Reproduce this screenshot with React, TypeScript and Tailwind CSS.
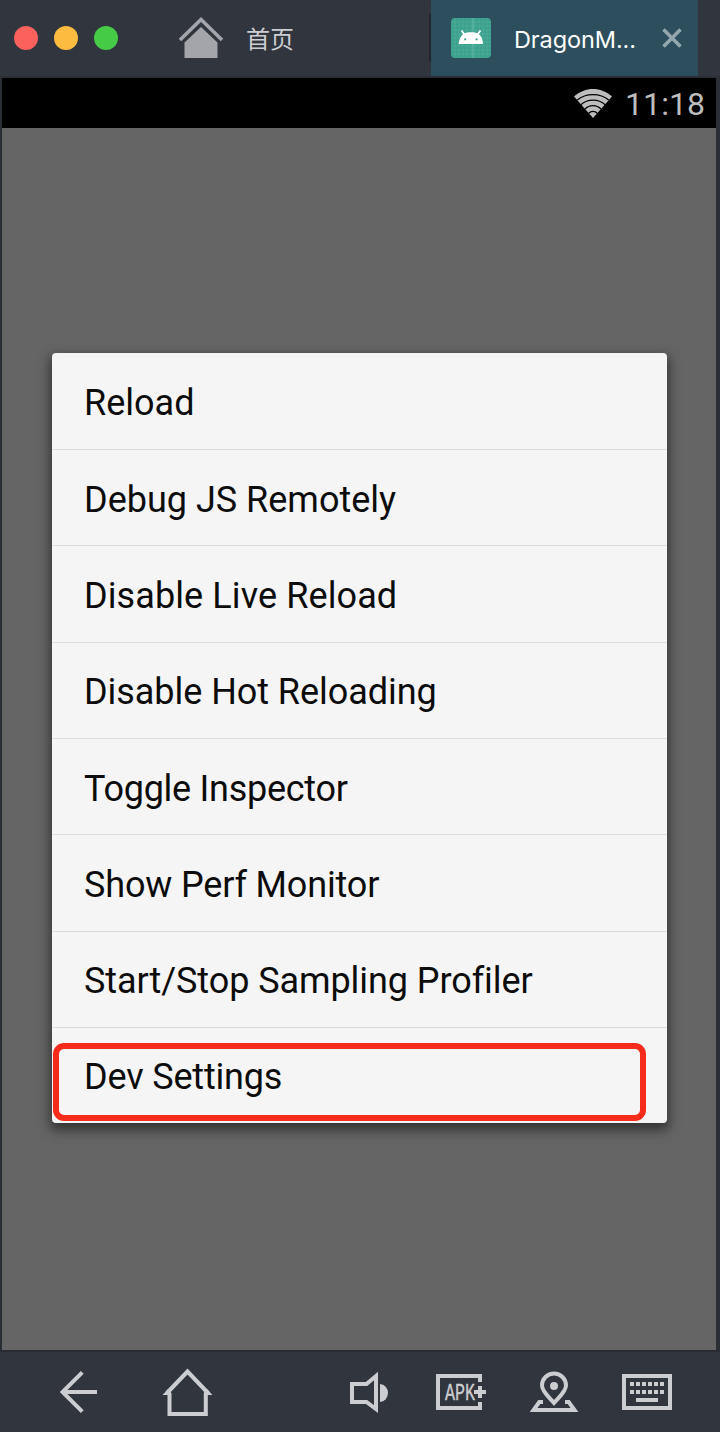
import type { ReactNode } from "react";

type MenuItem = { label: string; spacing: string; highlighted?: boolean };

const items: MenuItem[] = [
  { label: "Reload", spacing: "tracking-[0px]" },
  { label: "Debug JS Remotely", spacing: "tracking-[0px]" },
  { label: "Disable Live Reload", spacing: "tracking-[0.1px]" },
  { label: "Disable Hot Reloading", spacing: "tracking-[-0.05px]" },
  { label: "Toggle Inspector", spacing: "tracking-[-0.27px]" },
  { label: "Show Perf Monitor", spacing: "tracking-[-0.16px]" },
  { label: "Start/Stop Sampling Profiler", spacing: "tracking-[-0.07px]" },
  { label: "Dev Settings", spacing: "tracking-[-0.17px]", highlighted: true },
];

function TitleBar() {
  return (
    <header className="flex h-[76px] shrink-0 items-center bg-[#31353d]">
      <div className="ml-[14px] flex w-[104px] gap-4">
        <span className="size-6 rounded-full bg-[#fc615d]" />
        <span className="size-6 rounded-full bg-[#fdbc40]" />
        <span className="size-6 rounded-full bg-[#45cb46]" />
      </div>
      <div className="ml-[60px] flex items-center">
        <svg width="46" height="44" viewBox="0 0 46 44" fill="#a3a5aa">
          <path d="M2 24 L23 3.5 L44 24" fill="none" stroke="#a3a5aa" strokeWidth="3.6" />
          <path d="M23 11 L39.5 26.5 V42 H6.5 V26.5 Z" />
        </svg>
        <span className="mt-[4px] ml-[22px] text-[24px] leading-none text-[#cdced3]">首页</span>
      </div>
      <div className="ml-auto flex h-full items-center">
        <span className="h-12 w-[2px] bg-[#23272d]" />
        <div className="flex h-full w-[267px] items-center bg-[#2d4e5d]">
          <svg className="ml-5" width="40" height="40" viewBox="0 0 40 40">
            <rect width="40" height="40" rx="4" fill="#3ba18e" />
            <path d="M4 0V40M8 0V40M12 0V40M16 0V40M20 0V40M24 0V40M28 0V40M32 0V40M36 0V40M0 4H40M0 8H40M0 12H40M0 16H40M0 20H40M0 24H40M0 28H40M0 32H40M0 36H40" stroke="#55b09f" strokeWidth=".5" />
            <path d="M22 0V40" stroke="#68bbab" strokeWidth="1" />
            <path d="M13.5 16.5 L10.5 12.5 M26.5 16.5 L29.5 12.5" fill="none" stroke="#fff" strokeWidth="1.8" />
            <path d="M7.5 26 C8.5 21 9.5 18 13 15.5 C17 13.8 23 13.8 27 15.5 C30.5 18 31.5 21 32 26 Z" fill="#fff" />
            <circle cx="14.2" cy="21.3" r="1.1" fill="#3ba18e" />
            <circle cx="25.6" cy="21.3" r="1.1" fill="#3ba18e" />
          </svg>
          <span className="mt-[4px] ml-[23px] w-[123px] whitespace-nowrap font-[Inter,sans-serif] text-[23.5px] leading-none tracking-[-0.1px] text-white">DragonM...</span>
          <svg className="ml-[25px]" width="20" height="20" viewBox="0 0 20 20">
            <path d="M1.5 1.5L18.5 18.5M18.5 1.5L1.5 18.5" stroke="#94a7ae" strokeWidth="3.6" />
          </svg>
        </div>
        <span className="w-[22px]" />
      </div>
    </header>
  );
}

function StatusBar() {
  return (
    <div className="flex h-[50px] shrink-0 items-center justify-end bg-black pr-[11px]">
      <svg width="38" height="29" viewBox="0 0 38 29">
        <path d="M19 29 L0 7.5 C11 -2.5 27 -2.5 38 7.5 Z" fill="#bdbdbd" />
        <g fill="none" stroke="#000" strokeWidth="1.2">
          <path d="M3 11.3 C12 3.8 26 3.8 35 11.3" />
          <path d="M6.8 15.7 C13.5 9.5 24.5 9.5 31.2 15.7" />
          <path d="M10.8 20.2 C15.5 15.5 22.5 15.5 27.2 20.2" />
          <path d="M14.5 24.5 C17 21.6 21 21.6 23.5 24.5" />
        </g>
      </svg>
      <span className="mt-[2px] ml-[13px] text-[32px] leading-none tracking-[0.05px] text-[#bdbdbd]">11:18</span>
    </div>
  );
}

function Menu() {
  return (
    <ul className="mt-[225px] ml-[50px] grid h-[770px] w-[615px] grid-rows-[97px_repeat(6,96.33px)_1fr] rounded-[4px] bg-[#f5f5f5] shadow-[0_5px_12px_2px_rgba(0,0,0,0.5)]">
      {items.map((item) => (
        <li key={item.label} className="relative flex items-center border-b border-[#dcdcdc] pl-8 last:border-b-0">
          <span className={`mt-[4px] whitespace-nowrap text-[36px] leading-[42px] text-[#0c0c0c] ${item.spacing}`}>{item.label}</span>
          {item.highlighted && (
            <span className="absolute top-[15px] left-[1px] h-[78px] w-[593px] rounded-[11px] border-6 border-[#f52c1c]" />
          )}
        </li>
      ))}
    </ul>
  );
}

function DockIcon({ box, place, children }: { box: string; place: string; children: ReactNode }) {
  return (
    <svg className={`h-[54px] shrink-0 ${place}`} viewBox={box} fill="none" stroke="#cbcdd0" strokeWidth="4">
      {children}
    </svg>
  );
}

function Dock() {
  return (
    <footer className="flex h-[82px] shrink-0 items-start border-t-2 border-[#282c32] bg-[#31353d] pt-[13px]">
      <DockIcon box="60 1365 38 54" place="ml-[60px] w-[38px]">
        <path d="M82.3 1372.3 L62.5 1392 L82.3 1411.7 M62.5 1392 H97" />
      </DockIcon>
      <DockIcon box="162 1365 52 54" place="ml-[64px] w-[52px]">
        <path d="M169.5 1393 V1414 H205.8 V1393" />
        <path d="M167 1393 L187.5 1371.5 L208 1393" />
        <path d="M162.5 1395 H171 V1389 H168 Z M212.5 1395 H204 V1389 H207 Z" fill="#cbcdd0" stroke="none" />
      </DockIcon>
      <DockIcon box="350 1365 40 54" place="ml-[136px] w-[40px]">
        <path d="M352 1384 H366.5 L376 1376 V1409 L366.5 1402 H352 Z" />
        <path d="M380 1384 A8 9 0 0 1 380 1402 Z" fill="#cbcdd0" stroke="none" />
      </DockIcon>
      <DockIcon box="436 1365 52 54" place="ml-[46px] w-[52px]">
        <path d="M480 1382 V1376 H438 V1408 H480 V1402" />
        <path d="M474 1392 H486 M480 1386 V1398" />
        <text x="445" y="1400" textLength="30" lengthAdjust="spacingAndGlyphs" fill="#cbcdd0" stroke="#cbcdd0" strokeWidth="0.4" fontFamily="Liberation Mono, monospace" fontSize="24">APK</text>
      </DockIcon>
      <DockIcon box="530 1365 50 54" place="ml-[42px] w-[50px]">
        <path d="M554 1403 C549 1397 542 1391.5 542 1385.5 A12 12 0 0 1 566 1385.5 C566 1391.5 559 1397 554 1403 Z" />
        <circle cx="554" cy="1386" r="4" fill="#cbcdd0" stroke="none" />
        <path d="M543 1402 H539.3 L533.5 1410 H574.5 L568.7 1402 H565" />
      </DockIcon>
      <DockIcon box="622 1365 50 54" place="ml-[42px] w-[50px]">
        <path d="M624 1376 H670 V1408 H624 Z" />
        <path d="M630 1384 H664 M630 1392 H664" strokeDasharray="4 2" />
        <path d="M636 1400 H658" />
      </DockIcon>
    </footer>
  );
}

export default function App() {
  return (
    <div className="flex h-[1432px] w-[720px] flex-col overflow-hidden bg-[#2a2f35] font-[Roboto,'Noto_Sans_CJK_SC',sans-serif]">
      <TitleBar />
      <main className="mt-[2px] mr-[4px] ml-[2px] flex h-[1272px] shrink-0 flex-col bg-[#656565]">
        <StatusBar />
        <Menu />
      </main>
      <Dock />
    </div>
  );
}
